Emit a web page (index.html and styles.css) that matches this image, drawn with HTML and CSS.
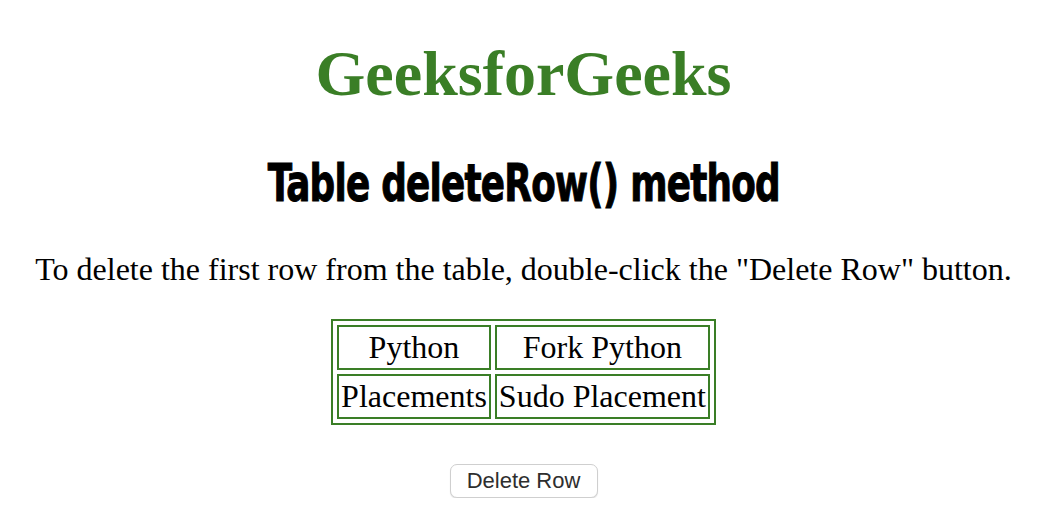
FILE: index.html
```html
<!DOCTYPE html>
<html>
<head>
<meta charset="utf-8">
<title>Table deleteRow() method</title>
<link rel="stylesheet" href="styles.css">
</head>
<body>
<main class="page">
  <h1 class="brand">GeeksforGeeks</h1>
  <h2 class="title"><span class="title-text">Table deleteRow() method</span></h2>
  <p class="intro">To delete the first row from the table, double-click the "Delete Row" button.</p>
  <table class="data">
    <tr>
      <td>Python</td>
      <td>Fork Python</td>
    </tr>
    <tr>
      <td>Placements</td>
      <td>Sudo Placement</td>
    </tr>
  </table>
  <div class="actions">
    <button class="btn" type="button">Delete Row</button>
  </div>
</main>
</body>
</html>
```

FILE: styles.css
```css
html, body {
  margin: 0;
  padding: 0;
  background: #ffffff;
}

.page {
  width: 1047px;
  text-align: center;
  font-family: "Liberation Serif", "Times New Roman", serif;
  color: #000;
}

.brand {
  margin: 37px 0 0;
  font-size: 64px;
  line-height: 74px;
  font-weight: bold;
  color: #3a7e26;
}

.title {
  margin: 42px 0 0;
  line-height: 60px;
  font-size: 52px;
  font-family: "DejaVu Sans Condensed", "DejaVu Sans", sans-serif;
  font-weight: bold;
}

.title-text {
  display: inline-block;
  transform: scaleX(0.765);
  letter-spacing: -1px;
  -webkit-text-stroke: 1px #000;
}

.intro {
  margin: 38px 0 0;
  font-size: 32px;
  line-height: 37px;
}

.data {
  margin: 31px auto 0;
  border: 2px solid #3a7e26;
  border-spacing: 4px;
  font-size: 32px;
}

.data td {
  border: 2px solid #3a7e26;
  padding: 2px;
  line-height: 37px;
}

.actions {
  margin-top: 39px;
}

.btn {
  width: 148px;
  height: 34px;
  padding: 0;
  border: 1px solid #cfcfcf;
  border-radius: 7px;
  background: #ffffff;
  box-shadow: 0 1px 1px rgba(0, 0, 0, 0.12);
  color: #2e2e2e;
  font-family: "Liberation Sans", Arial, sans-serif;
  font-size: 22px;
}
```
